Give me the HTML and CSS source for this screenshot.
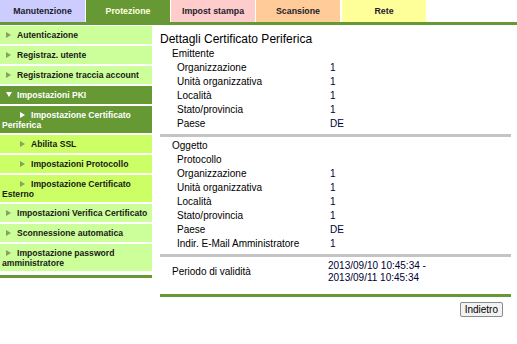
FILE: index.html
```html
<!DOCTYPE html>
<html lang="it">
  <head>
    <meta charset="UTF-8" />
    <title>Dettagli Certificato Periferica</title>
    <link rel="stylesheet" href="styles.css">
  </head>
  <body>
    <div class="tabs">
      <div class="tab tab-maint">Manutenzione</div>
      <div class="tab tab-active">Protezione</div>
      <div class="tab tab-print">Impost stampa</div>
      <div class="tab tab-scan">Scansione</div>
      <div class="tab tab-net">Rete</div>
    </div>
    <div class="topbar"></div>

    <div class="main">
      <div class="sidebar">
        <ul class="menu">
          <li class="item">Autenticazione</li>
          <li class="item">Registraz. utente</li>
          <li class="item">Registrazione traccia account</li>
          <li class="item open">Impostazioni PKI</li>
          <li class="item sub selected">Impostazione Certificato Periferica</li>
          <li class="item sub">Abilita SSL</li>
          <li class="item sub">Impostazioni Protocollo</li>
          <li class="item sub">Impostazione Certificato Esterno</li>
          <li class="item">Impostazioni Verifica Certificato</li>
          <li class="item">Sconnessione automatica</li>
          <li class="item">Impostazione password amministratore</li>
        </ul>
        <div class="side-line"></div>
      </div>

      <div class="content">
        <h1>Dettagli Certificato Periferica</h1>

        <div class="group">
          <div class="head">Emittente</div>
          <div class="row"><span class="label">Organizzazione</span><span class="value">1</span></div>
          <div class="row"><span class="label">Unità organizzativa</span><span class="value">1</span></div>
          <div class="row"><span class="label">Località</span><span class="value">1</span></div>
          <div class="row"><span class="label">Stato/provincia</span><span class="value">1</span></div>
          <div class="row"><span class="label">Paese</span><span class="value">DE</span></div>
        </div>
        <div class="sep"></div>

        <div class="group">
          <div class="head">Oggetto</div>
          <div class="row"><span class="label">Protocollo</span><span class="value"></span></div>
          <div class="row"><span class="label">Organizzazione</span><span class="value">1</span></div>
          <div class="row"><span class="label">Unità organizzativa</span><span class="value">1</span></div>
          <div class="row"><span class="label">Località</span><span class="value">1</span></div>
          <div class="row"><span class="label">Stato/provincia</span><span class="value">1</span></div>
          <div class="row"><span class="label">Paese</span><span class="value">DE</span></div>
          <div class="row"><span class="label">Indir. E-Mail Amministratore</span><span class="value">1</span></div>
        </div>
        <div class="sep"></div>

        <div class="period">
          <span class="label">Periodo di validità</span>
          <span class="value">2013/09/10 10:45:34 -<br>2013/09/11 10:45:34</span>
        </div>
        <div class="end-line"></div>

        <div class="actions">
          <button class="btn">Indietro</button>
        </div>
      </div>
    </div>
  </body>
</html>
```

FILE: styles.css
```css
body {
  margin: 0;
  font-family: "Liberation Sans", Arial, sans-serif;
  font-size: 10px;
  color: #000;
  background-color: #fff;
}

/* tab strip */
.tabs {
  display: flex;
  gap: 1px;
}

.tab {
  width: 84px;
  height: 22px;
  line-height: 22px;
  text-align: center;
  font-size: 8.8px;
  font-weight: bold;
  color: #1c1c2c;
}

.tab-maint {
  width: 85px;
  background-color: #ccccff;
}

.tab-active {
  background-color: #669933;
  color: #ffffe0;
}

.tab-print {
  background-color: #ffcccc;
}

.tab-scan {
  background-color: #ffcc99;
}

.tab-net {
  background-color: #ffff99;
  margin-left: 1px;
}

.topbar {
  height: 3px;
  background-color: #669933;
}

.main {
  display: flex;
}

/* left menu */
.sidebar {
  width: 152px;
  margin-right: 8px;
  padding-top: 1px;
}

.menu {
  list-style: none;
  margin: 0;
  padding: 0;
  display: flex;
  flex-direction: column;
  gap: 2px;
}

.item {
  background-color: #ccff99;
  padding: 4px 2px 3px 2px;
  min-height: 11px;
  text-indent: 4px;
  font-size: 8.6px;
  font-weight: bold;
  line-height: 10px;
  color: #1a1a1a;
}

.item::before {
  content: "";
  display: inline-block;
  width: 0;
  height: 0;
  border-left: 5px solid #88a060;
  border-top: 3px solid transparent;
  border-bottom: 3px solid transparent;
  margin-right: 6px;
  vertical-align: 0;
}

.item.sub {
  text-indent: 18px;
  background-color: #ccff66;
}

.item.open,
.item.selected {
  background-color: #669933;
  color: #fff;
}

.item.open::before {
  border-top: 5px solid #fff;
  border-left: 3px solid transparent;
  border-right: 3px solid transparent;
  border-bottom: 0;
  margin-right: 5px;
  vertical-align: 1px;
}

.item.selected::before {
  border-left-color: #fff;
}

.side-line {
  height: 3px;
  margin-top: 4px;
  background-color: #669933;
}

/* detail panel */
.content {
  width: 351px;
}

.content h1 {
  margin: 0;
  padding-top: 6px;
  font-size: 12px;
  font-weight: normal;
  line-height: 16px;
}

.group {
  line-height: 14px;
}

.head {
  padding-left: 12px;
}

.row {
  display: flex;
  padding-left: 17px;
}

.row .label {
  width: 153px;
}

.value {
  color: #000033;
}

.sep {
  height: 3px;
  margin: 3px 0 2px 0;
  background-color: #c4c4c4;
}

.period {
  display: flex;
  align-items: center;
  padding-left: 12px;
  padding-top: 1px;
  line-height: 12px;
}

.period .label {
  width: 156px;
}

.end-line {
  height: 3px;
  margin-top: 10px;
  background-color: #669933;
}

.actions {
  text-align: right;
  padding: 5px 8px 0 0;
}

.btn {
  font-family: "Liberation Sans", Arial, sans-serif;
  font-size: 10px;
  padding: 1px 4px;
  background-color: #f2f2f2;
  border: 1px solid #8a8a8a;
  border-radius: 2px;
  color: #000;
}
```
